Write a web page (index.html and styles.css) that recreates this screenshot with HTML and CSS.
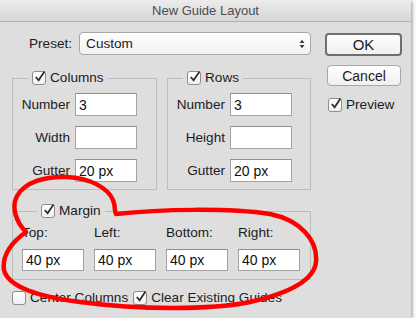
FILE: index.html
```html
<!DOCTYPE html>
<html lang="en">
<head>
  <meta charset="UTF-8">
  <title>New Guide Layout</title>
  <link rel="stylesheet" href="styles.css">
</head>
<body>
  <div class="window">
    <div class="titlebar">New Guide Layout</div>
    <div class="content">
      <div class="main">
        <div class="preset-row">
          <span>Preset:</span>
          <div class="popup">
            <span>Custom</span>
            <svg width="6" height="10" viewBox="0 0 6 10"><path d="M0.5 4 L3 0.8 L5.5 4Z M0.5 6 L3 9.2 L5.5 6Z" fill="#3a3a3a"/></svg>
          </div>
        </div>

        <div class="groups">
          <fieldset class="group">
            <legend><span class="check"><svg width="14" height="14" viewBox="0 0 14 14"><path d="M2.8 7 L5.6 10.3 L11.5 1.5" fill="none" stroke="#2a2a2a" stroke-width="1.7"/></svg></span>Columns</legend>
            <div class="field"><label>Number</label><input type="text" value="3"></div>
            <div class="field"><label>Width</label><input type="text" value=""></div>
            <div class="field"><label>Gutter</label><input type="text" value="20 px"></div>
          </fieldset>
          <fieldset class="group">
            <legend><span class="check"><svg width="14" height="14" viewBox="0 0 14 14"><path d="M2.8 7 L5.6 10.3 L11.5 1.5" fill="none" stroke="#2a2a2a" stroke-width="1.7"/></svg></span>Rows</legend>
            <div class="field"><label>Number</label><input type="text" value="3"></div>
            <div class="field"><label>Height</label><input type="text" value=""></div>
            <div class="field"><label>Gutter</label><input type="text" value="20 px"></div>
          </fieldset>
        </div>

        <fieldset class="group margin-group">
          <legend><span class="check"><svg width="14" height="14" viewBox="0 0 14 14"><path d="M2.8 7 L5.6 10.3 L11.5 1.5" fill="none" stroke="#2a2a2a" stroke-width="1.7"/></svg></span>Margin</legend>
          <div class="margin-fields">
            <div class="mfield"><label>Top:</label><input type="text" value="40 px"></div>
            <div class="mfield"><label>Left:</label><input type="text" value="40 px"></div>
            <div class="mfield"><label>Bottom:</label><input type="text" value="40 px"></div>
            <div class="mfield"><label>Right:</label><input type="text" value="40 px"></div>
          </div>
        </fieldset>

        <div class="options">
          <label class="option"><span class="check"></span>Center Columns</label>
          <label class="option"><span class="check"><svg width="14" height="14" viewBox="0 0 14 14"><path d="M2.8 7 L5.6 10.3 L11.5 1.5" fill="none" stroke="#2a2a2a" stroke-width="1.7"/></svg></span>Clear Existing Guides</label>
        </div>
      </div>

      <div class="side">
        <button class="btn btn-default">OK</button>
        <button class="btn btn-cancel">Cancel</button>
        <label class="option preview"><span class="check"><svg width="14" height="14" viewBox="0 0 14 14"><path d="M2.8 7 L5.6 10.3 L11.5 1.5" fill="none" stroke="#2a2a2a" stroke-width="1.7"/></svg></span>Preview</label>
      </div>
    </div>

    <!-- red hand-drawn loop round the Margin group -->
    <svg class="annotation" width="418" height="325" viewBox="0 0 418 325">
      <path d="M26 232 C16 222 11 207 17 196 C25 182 45 176 67 177 C90 178 108 188 113 200 C116 207 114 212 116 214
               C160 209 230 208 270 214 C300 220 318 240 316 262 C314 280 290 293 250 302
               C210 310 140 310 80 302 C40 297 8 287 4 270 C2 255 12 242 26 232"
            fill="none" stroke="#ff0000" stroke-width="4.5" stroke-linecap="round" stroke-linejoin="round"/>
    </svg>
  </div>
</body>
</html>
```

FILE: styles.css
```css
body{
  margin: 0;
  background-color: #fff;
  font-family: "Liberation Sans", Arial, sans-serif;
  font-size: 13.6px;
  color: #1c1c1c;
}
.window{
  position: relative;
  width: 411px;
  height: 318px;
  background-color: #dedede;
  box-shadow: 1px 1px 4px rgba(0,0,0,.45);
}
.titlebar{
  height: 21px;
  line-height: 21px;
  text-align: center;
  font-size: 13px;
  color: #4d4d4d;
  background: linear-gradient(#ececec, #d6d6d6);
  border-bottom: 1px solid #b4b4b4;
}
.content{
  display: flex;
  gap: 16px;
  padding: 10px 0 0 12px;
}
.main{
  width: 299px;
}
.preset-row{
  display: flex;
  align-items: center;
  gap: 7px;
  padding-left: 17px;
}
.popup{
  width: 232px;
  height: 23px;
  box-sizing: border-box;
  display: flex;
  align-items: center;
  justify-content: space-between;
  padding: 0 5px 0 6px;
  border: 1px solid #a9a9a9;
  border-radius: 4px;
  background: linear-gradient(#fefefe, #f2f2f2);
}
.groups{
  display: grid;
  grid-template-columns: 145px 144px;
  gap: 10px;
  margin-top: 16px;
}
.group{
  margin: 0;
  padding: 8px 0 7px;
  min-width: 0;
  border: 1px solid #bdbdbd;
}
.group legend{
  display: flex;
  align-items: center;
  gap: 4px;
  margin-left: 15px;
  padding: 0 4px 0 4px;
  line-height: 14px;
}
.field{
  display: flex;
  align-items: center;
  gap: 5px;
}
.field + .field{
  margin-top: 10px;
}
.field label{
  width: 57px;
  text-align: right;
}
input[type="text"]{
  width: 62px;
  height: 23px;
  box-sizing: border-box;
  margin: 0;
  padding: 0 3px;
  border: 1px solid #a3a3a3;
  border-top-color: #8e8e8e;
  background-color: #fff;
  font-family: inherit;
  font-size: 14px;
  color: #111;
  outline: none;
}
.margin-group{
  margin-top: 14px;
  padding: 7px 0 8px 9px;
}
.margin-fields{
  display: flex;
  gap: 10px;
}
.mfield label{
  display: block;
  line-height: 16px;
  margin-bottom: 8px;
}
.mfield input[type="text"]{
  height: 22px;
}
.options{
  display: flex;
  gap: 5px;
  margin-top: 11px;
}
.option{
  display: flex;
  align-items: center;
  gap: 4px;
  line-height: 14px;
}
.check{
  width: 14px;
  height: 14px;
  box-sizing: border-box;
  border: 1px solid #8d8d8d;
  border-radius: 3px;
  background: linear-gradient(#fff, #f1f1f1);
}
.check svg{
  display: block;
  margin: -2px 0 0 0;
  overflow: visible;
}
.side{
  width: 75px;
  display: flex;
  flex-direction: column;
  margin-top: 1px;
}
.btn{
  box-sizing: border-box;
  margin: 0;
  padding: 0;
  border: 1px solid #a8a8a8;
  border-radius: 4px;
  background: linear-gradient(#fefefe, #f0f0f0);
  font-family: inherit;
  font-size: 14px;
  color: #1c1c1c;
}
.btn-default{
  width: 77px;
  height: 23px;
  margin-left: -2px;
  border: 2px solid #6f6f6f;
  font-size: 15px;
}
.btn-cancel{
  width: 74px;
  height: 21px;
  margin-top: 9px;
}
.preview{
  margin-top: 12px;
  margin-left: 1px;
}
.annotation{
  position: absolute;
  left: 0;
  top: 0;
  pointer-events: none;
}
```
